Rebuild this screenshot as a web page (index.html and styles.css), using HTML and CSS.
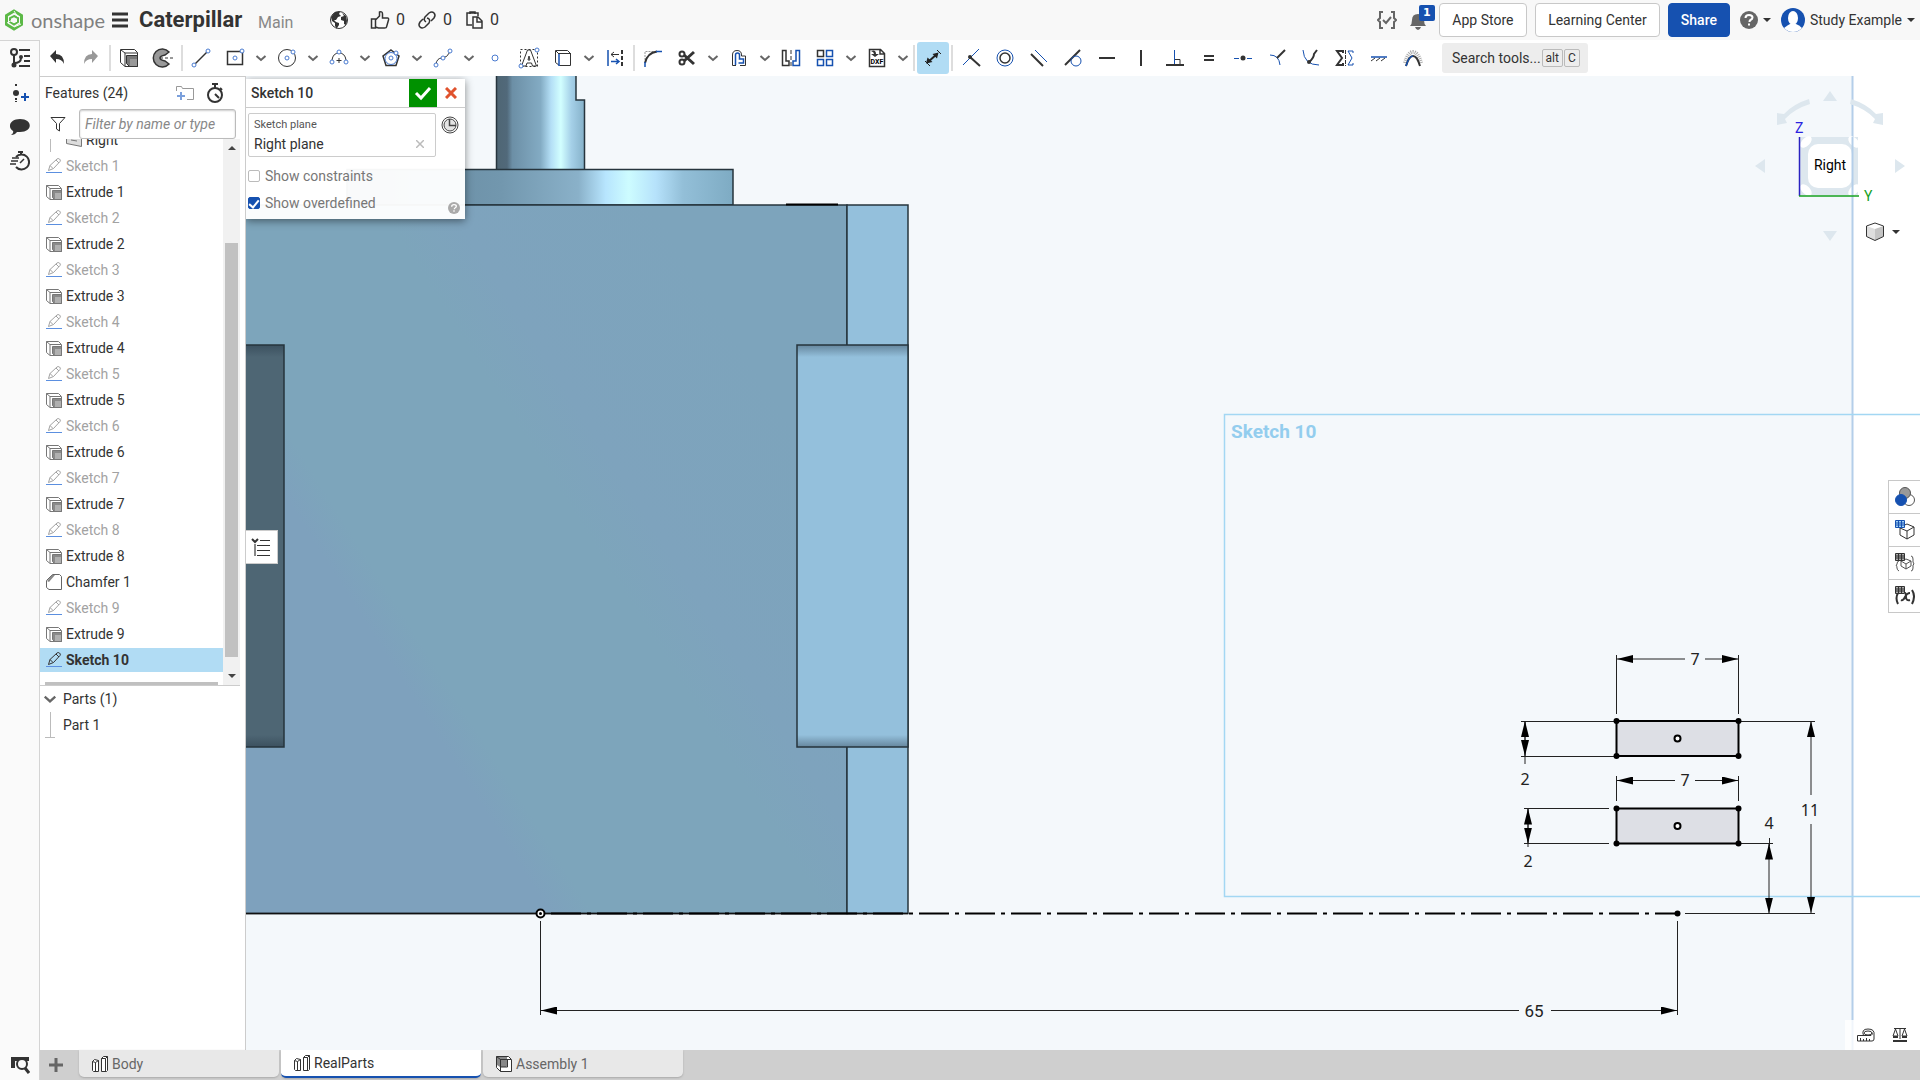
FILE: index.html
```html
<!DOCTYPE html>
<html lang="en">
<head>
<meta charset="utf-8">
<title>Caterpillar | RealParts</title>
<link rel="stylesheet" href="styles.css">
</head>
<body>
<svg class="defs" aria-hidden="true">
  <symbol id="sketch" viewBox="0 0 16 16"><path d="M2.500 12.500l1.500-5 7-6.500q1-1 2.500 0t.500 2.500L7.500 10.500zM4 7.500l3 3M10 2l3 3" fill="none" stroke="currentColor"/><path d="M0 14.500h16" stroke="#5b8fe0"/></symbol>
  <symbol id="extrude" viewBox="0 0 16 16"><path d="M.5 1.500h12l3 3v11H4l-3.500-3zM.5 1.500l3.500 3V15M4 4.500h11" fill="#fff" stroke="#777"/><path d="M6.500 6.500h9v9h-7l-2-2z" fill="#8a8a8a" stroke="#777"/><path d="M9 9h6v6H9z" fill="#b0b0b0"/></symbol>
  <symbol id="chev" viewBox="0 0 12 12"><path d="M1.500 4l4.500 4 4.500-4" fill="none" stroke="#666" stroke-width="2"/></symbol>
  <symbol id="studio" viewBox="0 0 18 18"><path d="M1.500 6.500l2-2 4 1v11h-5l-1-1zM1.500 6.500l3 1v9M4.500 7.500l3-2M10.500 3.500l2-2h4v14l-1 1h-5zM10.500 3.500h4v13M14.500 3.500l2-2" fill="#fff" stroke="#333"/></symbol>
</svg>

<header class="header">
  <a class="logo" href="#"><svg width="20" height="22" viewBox="0 0 20 22" fill="none" stroke="#5cb947"><path d="M10 2l7.500 4.500v9L10 20l-7.500-4.500v-9z" stroke-width="3"/><path d="M10 7l4 2v4l-4 2.500L6 13V9z" stroke-width="2"/><path d="M3 14l7-4M10 2l4 6M17 15l-7 3" stroke="#f8f8f8"/></svg><span>onshape</span></a>
  <button class="bare menu" aria-label="Menu"><svg width="16" height="16"><path d="M0 2h16M0 8h16M0 14h16" stroke="#333" stroke-width="3"/></svg></button>
  <h1>Caterpillar</h1><span class="branch">Main</span>
  <div class="stats">
    <svg class="globe" width="20" height="20" viewBox="0 0 20 20"><circle cx="10" cy="10" r="8.500" fill="#fff" stroke="#333"/><path d="M2 7l4-5 5 0-1 2 2 2-3 1-2 3H5l2 2 3 1 0 2-2 3v1l-2-3v-3l-3-2zM13 3l4 3 1 5-1 4-2-1v-3l-3-1 0-3 3-1z" fill="#333"/></svg>
    <button class="bare stat"><svg width="20" height="20" viewBox="0 0 20 20"><path d="M1.500 9h4v9h-4zM5.500 10l4-4V2q3-1 3 2v4h5q1.500 0 1 2l-2 7q0 1-2 1h-6l-3-1" fill="none" stroke="#333" stroke-width="1.500"/></svg>0</button>
    <button class="bare stat"><svg width="20" height="20" viewBox="0 0 20 20" fill="none" stroke="#333" stroke-width="1.500"><path d="M9 12Q6 10 8 7l4-4q3-2 5 0t0 5l-3 3M10 8q4 1 2 5l-4 4q-3 2-5 0t0-5l3-3"/></svg>0</button>
    <button class="bare stat"><svg width="20" height="20" viewBox="0 0 20 20" fill="none" stroke="#333" stroke-width="1.500"><path d="M8 15H3V3h11v3M6 4V2h5v2M9 7h5l4 4v7H9zM13 7v5h5"/></svg>0</button>
  </div>
  <div class="account">
    <svg class="braces" width="20" height="20" viewBox="0 0 20 20" fill="none" stroke="#666" stroke-width="2"><path d="M6 2H3v6l-2 2 2 2v6h3M14 2h3v6l2 2-2 2v6h-3M6 10l3 3 5-6"/></svg>
    <button class="bare bell" aria-label="Notifications"><svg width="18" height="20" viewBox="0 0 18 20"><path d="M1 16q2-2 2-6 0-6 6-6t6 6q0 4 2 6zM6 17h6q-1 3-3 3t-3-3" fill="#666"/></svg><span class="badge">1</span></button>
    <button class="btn">App Store</button>
    <button class="btn learn">Learning Center</button>
    <button class="btn share">Share</button>
    <button class="bare help" aria-label="Help"><svg width="18" height="18" viewBox="0 0 18 18"><circle cx="9" cy="9" r="9" fill="#666"/><path d="M5.500 7q0-3 3.500-3t3.500 2.500q0 1.500-2 2.500-1 .5-1 2M9 12.500v2" fill="none" stroke="#fff" stroke-width="2"/></svg><i class="caret"></i></button>
    <button class="bare user"><svg width="24" height="24" viewBox="0 0 24 24"><circle cx="12" cy="12" r="12" fill="#1651b0"/><ellipse cx="12" cy="10" rx="5" ry="7" fill="#fff"/><path d="M3 20q4-3 6-4h6q3 1 6 4-4 4-9 4t-9-4" fill="#fff"/></svg>Study Example<i class="caret"></i></button>
  </div>
</header>

<div class="work">
  <nav class="rail" aria-label="Document panels">
    <svg width="20" height="20" viewBox="0 0 20 20" fill="none" stroke="#333" stroke-width="2"><circle cx="4" cy="4" r="3"/><path d="M4 7v11M4 15q7 0 7-5M9 2h11M14 8h6M14 13h6M9 18h11"/><circle cx="11" cy="9" r="1"/><circle cx="4" cy="17" r="1.500"/></svg>
    <svg width="20" height="20" viewBox="0 0 20 20" stroke="#333" stroke-width="2"><path d="M6 1v3M6 15v4" stroke-dasharray="2 1"/><circle cx="6" cy="10" r="3" fill="#333" stroke="none"/><path d="M11 14h8M15 10v8" stroke="#1651b0"/></svg>
    <svg width="20" height="18" viewBox="0 0 20 18"><path d="M10 1c13 0 13 13 0 13q-2 0-3 0-2 3-6 3 3-2 2-4C-3 9 0 1 10 1" fill="#333"/></svg>
    <svg width="20" height="20" viewBox="0 0 20 20" fill="none" stroke="#333" stroke-width="2"><path d="M6 6a7.500 7.500 0 1 1 0 10M8 1h5M11 1v3"/><path d="M2 7h7M1 10h7M0 13h6M10 12l4-4" stroke-width="1.500"/></svg>
    <svg class="last" width="20" height="20" viewBox="0 0 20 20"><path d="M1 3h18v4H1zM1 7h4v7H1z" fill="#333"/><circle cx="12" cy="10" r="5" fill="#fafafa" stroke="#333" stroke-width="2"/><path d="M15 14l4 5" stroke="#333" stroke-width="3"/></svg>
  </nav>

  <div class="stage">
    <div class="toolbar" role="toolbar">
      <button class="tool" aria-label="Undo"><svg class="ic"><path d="M5 10l6-6v4q8 0 8 10-2-5-8-5v4z" fill="#333"/></svg></button>
      <button class="tool" aria-label="Redo"><svg class="ic"><path d="M19 10l-6-6v4q-8 0-8 10 2-5 8-5v4z" fill="#999"/></svg></button>
      <i class="sep"></i>
      <button class="tool" aria-label="Extrude"><svg class="ic"><path d="M3.500 3.500h14l3 3v14H8l-4.500-4zM4 4l4 3v13M8 7h12.500" fill="none" stroke="#333"/><path d="M9.500 9.500h11v11h-8l-3-3z" fill="#777" stroke="#333"/><path d="M13 13h7v7h-7z" fill="#999"/></svg></button>
      <button class="tool" aria-label="Revolve"><svg class="ic"><path d="M18 6a9 9 0 1 0 0 12l-4-3q-5-1-5-3t5-3z" fill="#999" stroke="#333" stroke-width="1.500"/><path d="M9 12h13" stroke="#333" stroke-dasharray="3 2"/></svg></button>
      <i class="sep"></i>
      <button class="tool" aria-label="Line"><svg class="ic"><path d="M6 18L18 6" stroke="#333" stroke-width="1.500"/><g class="pt"><circle cx="5" cy="19" r="2"/><circle cx="19" cy="5" r="2"/></g></svg></button>
      <button class="tool drop" aria-label="Rectangle"><svg class="ic"><path d="M4.500 5.500h15v13h-15z" class="k w1"/><g class="pt"><circle cx="12" cy="12" r="2"/><circle cx="19" cy="5" r="2"/></g></svg><svg class="ch"><use href="#chev"/></svg></button>
      <button class="tool drop" aria-label="Circle"><svg class="ic"><circle cx="12" cy="12" r="8.500" class="k"/><g class="pt"><circle cx="12" cy="12" r="2"/><circle cx="18" cy="6" r="2"/></g></svg><svg class="ch"><use href="#chev"/></svg></button>
      <button class="tool drop" aria-label="Arc"><svg class="ic"><path d="M5 14Q6 7 12 7t7 7M9.500 14.500h5M12 12v5" class="k"/><g class="pt"><circle cx="5" cy="16" r="2"/><circle cx="19" cy="16" r="2"/><circle cx="12" cy="6" r="2"/></g></svg><svg class="ch"><use href="#chev"/></svg></button>
      <button class="tool drop" aria-label="Polygon"><svg class="ic"><path d="M12 4l8 6-3 9.500H7L4 10z" class="k w1"/><g class="pt"><circle cx="12" cy="12.500" r="6"/><circle cx="12" cy="12" r="2"/><circle cx="17" cy="7" r="2"/></g></svg><svg class="ch"><use href="#chev"/></svg></button>
      <button class="tool drop" aria-label="Spline"><svg class="ic"><path d="M5 18q1-6 6-6t8-6" class="k"/><g class="pt"><circle cx="5" cy="19" r="2"/><circle cx="12" cy="12" r="2"/><circle cx="19" cy="5" r="2"/></g></svg><svg class="ch"><use href="#chev"/></svg></button>
      <button class="tool" aria-label="Point"><svg class="ic"><g class="pt"><circle cx="12" cy="12" r="3"/></g></svg></button>
      <button class="tool" aria-label="Text"><svg class="ic"><path d="M3.500 3.500h17v17h-17z" fill="none" stroke="#333" stroke-dasharray="2 2"/><path d="M4.500 20l6-16h3l6 16h-4l-1-3H10l-1 3zM11 14h2l-1-4z" fill="#fff" stroke="#333"/><g class="pt"><circle cx="4" cy="20" r="2"/><circle cx="20" cy="4" r="2"/></g></svg></button>
      <button class="tool drop" aria-label="Use"><svg class="ic"><path d="M4.500 4.500h12l3 3v12h-11l-4-3zM8 7.500h12M5 5l3 3" class="k"/><path d="M8 8v12" class="b"/></svg><svg class="ch"><use href="#chev"/></svg></button>
      <button class="tool" aria-label="Intersect"><svg class="ic"><path d="M5 4v16M8 15.500h8M13 13l3 2.500-3 2.500" class="b"/><path d="M19 4v16" stroke="#333" stroke-width="2" stroke-dasharray="4 2"/><path d="M16 8.500H8M11 6L8 8.500 11 11" class="k"/></svg></button>
      <i class="sep"></i>
      <button class="tool" aria-label="Fillet"><svg class="ic"><path d="M4 14V5.500h9" stroke="#999" stroke-dasharray="2 1" fill="none"/><path d="M4 17Q6 7 16 5.500" class="k w"/><path d="M4 16v5M15 5.500h6" class="b"/></svg></button>
      <button class="tool drop" aria-label="Trim"><svg class="ic"><g class="k w"><circle cx="7" cy="8" r="2.500"/><circle cx="7" cy="16" r="2.500"/><path d="M9 9l10 9M9 15l10-9" stroke-width="3"/></g></svg><svg class="ch"><use href="#chev"/></svg></button>
      <button class="tool drop" aria-label="Offset"><svg class="ic"><path d="M9 19.500H5.500V9q0-4.500 4.500-4.500T14.500 9v1h4v9.500H13" class="k"/><path d="M8.500 19V9q0-2 2-2t2 2v4h4v4h-5" class="b"/></svg><svg class="ch"><use href="#chev"/></svg></button>
      <button class="tool" aria-label="Mirror"><svg class="ic"><path d="M3.500 4.500h3.500V15h3v4.500H3.500z" class="k w1"/><path d="M20.500 4.500H17V15h-3v4.500h6.500z" class="b"/><path d="M12 4v16" stroke="#333" stroke-dasharray="4 2"/></svg></button>
      <button class="tool drop" aria-label="Pattern"><svg class="ic"><path d="M4.500 4.500h6v6h-6z" class="k w1"/><path d="M13.500 4.500h6v6h-6zM4.500 13.500h6v6h-6zM13.500 13.500h6v6h-6z" class="b"/></svg><svg class="ch"><use href="#chev"/></svg></button>
      <button class="tool drop" aria-label="Insert DXF"><svg class="ic"><path d="M4.500 3.500h11l4 4v13h-15zM15 4v4h4" class="k w1"/><path d="M6 5q5-2 5 3h3l-4 3-4-3h3q0-2-3-3" fill="#333"/><text x="12" y="18" text-anchor="middle" font-size="7" font-weight="700">DXF</text></svg><svg class="ch"><use href="#chev"/></svg></button>
      <i class="sep"></i>
      <button class="tool on" aria-label="Dimension"><svg class="ic"><path d="M7 16L16 8" stroke="#222" stroke-width="2"/><path d="M17.500 6.500l-1.500 6-4.500-4.500zM5 17.500l1.500-6 5 4.500z" fill="#222"/><path d="M16 4l4 4M4 15l5 5" stroke="#222"/></svg></button>
      <i class="sep"></i>
      <button class="tool" aria-label="Coincident"><svg class="ic"><path d="M4 19L20 3" class="b1"/><path d="M11 11l10 9" class="k w"/><circle cx="11" cy="11" r="2" fill="#333"/></svg></button>
      <button class="tool" aria-label="Concentric"><svg class="ic"><circle cx="12" cy="12" r="8" class="b1"/><circle cx="12" cy="12" r="5" class="k w1"/></svg></button>
      <button class="tool" aria-label="Parallel"><svg class="ic"><path d="M4 8l12 12" class="k w"/><path d="M8 4l12 12" class="b1"/></svg></button>
      <button class="tool" aria-label="Tangent"><svg class="ic"><path d="M4 19L19 4" class="k w"/><circle cx="15" cy="15" r="5" class="b1"/></svg></button>
      <button class="tool" aria-label="Horizontal"><svg class="ic"><path d="M4 12h16" class="k w"/></svg></button>
      <button class="tool" aria-label="Vertical"><svg class="ic"><path d="M12 4v16" class="k w"/></svg></button>
      <button class="tool" aria-label="Perpendicular"><svg class="ic"><path d="M11.500 4v15" class="b1"/><path d="M12 13.500h5V19" class="k"/><path d="M3 19h18" class="k w"/></svg></button>
      <button class="tool" aria-label="Equal"><svg class="ic"><path d="M7 10h10M7 14h10" class="k w"/></svg></button>
      <button class="tool" aria-label="Midpoint"><svg class="ic"><path d="M3 12.500h5M16 12.500h5" class="b1"/><circle cx="12" cy="12" r="2.500" fill="#333"/></svg></button>
      <button class="tool" aria-label="Normal"><svg class="ic"><path d="M5 9q9 0 10 10" class="b1"/><path d="M12 12l8-8" class="k w"/></svg></button>
      <button class="tool" aria-label="Pierce"><svg class="ic"><path d="M4 4q1 15 16 15" class="b1"/><path d="M10 16q5-4 5-8l3-4" class="k w"/><circle cx="10" cy="16" r="2" fill="#333"/></svg></button>
      <button class="tool" aria-label="Symmetric"><svg class="ic"><path d="M10 7V5H4l5 7-5 7h6v-2" class="k w"/><path d="M20 7V5h-5l4 7-4 7h5v-2" class="b1"/><path d="M12.500 4v16" stroke="#333" stroke-dasharray="4 1"/></svg></button>
      <button class="tool" aria-label="Fix"><svg class="ic"><path d="M4 11h16" class="b"/><path d="M4 15l4-3M9 15l4-3M14 15l4-3" class="k"/></svg></button>
      <button class="tool" aria-label="Curvature"><svg class="ic"><path d="M4 17Q7 6 12 6t8 11" fill="none" stroke="#aaa" stroke-width="4" stroke-dasharray="1 1"/><path d="M5 20q3-10 7-10t7 10" class="k w"/><path d="M5 20q3-10 7-10" class="b"/></svg></button>
      <button class="search">Search tools...<kbd>alt</kbd><kbd>C</kbd></button>
    </div>

    <div class="middle">
      <aside class="features">
        <div class="fhead"><h2>Features (24)</h2>
          <button class="bare" aria-label="Add folder"><svg width="20" height="18" viewBox="0 0 20 18" fill="none"><path d="M1.500 7V2.500h5l1 2h11v11H12" stroke="#999"/><path d="M6 8v8M2 12h8" stroke="#7ba0dc" stroke-width="2"/></svg></button>
          <button class="bare" aria-label="Stopwatch"><svg width="20" height="20" viewBox="0 0 20 20" fill="none" stroke="#333" stroke-width="2"><circle cx="10" cy="12" r="7"/><path d="M7 1h6M10 1v4M15 5l2 2M10 11l4 4"/></svg></button></div>
        <div class="filter"><svg width="18" height="18" viewBox="0 0 18 18"><path d="M2 2.500h14l-5.500 6V16l-3-2V8.500z" fill="none" stroke="#333"/></svg><input type="text" aria-label="Filter" placeholder="Filter by name or type"></div>
        <div class="listbox">
          <ul class="list">
            <li class="plane"><svg class="fi"><path d="M.5 2.500l15 2v10l-15-3zM5 8l6 1" fill="#ddd" stroke="#777"/></svg>Right</li>
            <li class="off"><svg class="fi"><use href="#sketch"/></svg>Sketch 1</li>
            <li><svg class="fi"><use href="#extrude"/></svg>Extrude 1</li>
            <li class="off"><svg class="fi"><use href="#sketch"/></svg>Sketch 2</li>
            <li><svg class="fi"><use href="#extrude"/></svg>Extrude 2</li>
            <li class="off"><svg class="fi"><use href="#sketch"/></svg>Sketch 3</li>
            <li><svg class="fi"><use href="#extrude"/></svg>Extrude 3</li>
            <li class="off"><svg class="fi"><use href="#sketch"/></svg>Sketch 4</li>
            <li><svg class="fi"><use href="#extrude"/></svg>Extrude 4</li>
            <li class="off"><svg class="fi"><use href="#sketch"/></svg>Sketch 5</li>
            <li><svg class="fi"><use href="#extrude"/></svg>Extrude 5</li>
            <li class="off"><svg class="fi"><use href="#sketch"/></svg>Sketch 6</li>
            <li><svg class="fi"><use href="#extrude"/></svg>Extrude 6</li>
            <li class="off"><svg class="fi"><use href="#sketch"/></svg>Sketch 7</li>
            <li><svg class="fi"><use href="#extrude"/></svg>Extrude 7</li>
            <li class="off"><svg class="fi"><use href="#sketch"/></svg>Sketch 8</li>
            <li><svg class="fi"><use href="#extrude"/></svg>Extrude 8</li>
            <li><svg class="fi"><path d="M.5 6.500l6-6h7l2 2v13H3l-2.500-2z" fill="#fff" stroke="#666"/><path d="M1 7l5-6h3L3 8z" fill="#888"/></svg>Chamfer 1</li>
            <li class="off"><svg class="fi"><use href="#sketch"/></svg>Sketch 9</li>
            <li><svg class="fi"><use href="#extrude"/></svg>Extrude 9</li>
            <li class="sel"><svg class="fi"><use href="#sketch"/></svg>Sketch 10</li>
            <li class="rollback"></li>
          </ul>
          <div class="scroll"><i class="up"></i><i class="thumb"></i><i class="down"></i></div>
        </div>
        <div class="parts"><svg width="14" height="14"><use href="#chev"/></svg>Parts (1)</div>
        <div class="part"><i></i>Part 1</div>
      </aside>

      <main class="canvas">
        <svg class="scene" viewBox="246 76 1674 974" preserveAspectRatio="xMinYMin slice">
          <defs>
            <linearGradient id="shaft"><stop offset="0" stop-color="#4f6674"/><stop offset=".12" stop-color="#51697a"/><stop offset=".18" stop-color="#6c8fa6"/><stop offset=".5" stop-color="#83abc3"/><stop offset=".62" stop-color="#b4dff6"/><stop offset=".73" stop-color="#d2ffff"/><stop offset=".85" stop-color="#a5d0e8"/><stop offset="1" stop-color="#85b1c9"/></linearGradient>
            <linearGradient id="flange"><stop offset="0" stop-color="#63869b"/><stop offset=".4" stop-color="#7297ae"/><stop offset=".6" stop-color="#8ab1c9"/><stop offset=".67" stop-color="#b7e5fe"/><stop offset=".73" stop-color="#cdfcff"/><stop offset=".8" stop-color="#b6e2fb"/><stop offset=".87" stop-color="#93bfd8"/><stop offset="1" stop-color="#7eabc3"/></linearGradient>
            <linearGradient id="face" gradientUnits="userSpaceOnUse" x1="150" y1="560" x2="670" y2="230"><stop offset="0" stop-color="#7ea1bd"/><stop offset=".24" stop-color="#7ea1bd"/><stop offset=".3" stop-color="#7da5bb"/><stop offset=".62" stop-color="#7da5bb"/><stop offset=".72" stop-color="#7ea3bd"/><stop offset="1" stop-color="#7da4bc"/></linearGradient>
            <linearGradient id="inset" x1="0" y1="0" x2="0" y2="1"><stop offset="0" stop-color="#203040" stop-opacity=".4"/><stop offset=".03" stop-color="#203040" stop-opacity="0"/><stop offset=".97" stop-color="#203040" stop-opacity="0"/><stop offset="1" stop-color="#203040" stop-opacity=".4"/></linearGradient>
            <marker id="arrow" markerUnits="userSpaceOnUse" markerWidth="16" markerHeight="8" refX="16" refY="4" orient="auto-start-reverse"><path d="M0 0l16 4-16 4z"/></marker>
          </defs>
          <path d="M246 76h1607v974H246z" fill="#f4f8fb"/>
          <path d="M496.500 70H576v30h8.500v70h-88z" fill="url(#shaft)"/>
          <path d="M496.500 70v100M576 70v30h8.500v70" class="edge"/>
          <path d="M347 169.500h386V205H347z" fill="url(#flange)" class="edge"/>
          <path d="M240 205h607v708.500H240z" fill="url(#face)" class="edge"/>
          <path d="M847 205h61v708.500h-61z" fill="#94c0dc" class="edge"/>
          <path d="M786 204.500h52" stroke="#000" stroke-width="2"/>
          <path d="M797 345h111v402H797z" fill="#94c0dc"/><path d="M797 345h111v402H797z" fill="url(#inset)" class="edge"/>
          <path d="M240 345h44v402h-44z" fill="#4e6674"/><path d="M240 345h44v402h-44z" fill="url(#inset)" class="edge"/>
          <path d="M1852.500 70v990" stroke="#b4cee9" stroke-width="2"/>
          <path d="M1930 414.500H1224.500v482H1930" fill="none" stroke="#a3d7f3" stroke-width="1.500"/>
          <text x="1231" y="438" class="sketchname">Sketch 10</text>
          <path d="M246 913.500h662" stroke="#111" stroke-width="1.500"/>
          <path d="M551 913.500h1126" stroke="#000" stroke-width="2" stroke-dasharray="30 6 4 6"/>
          <g fill="#dddfe5" stroke="#000" stroke-width="2"><path d="M1616.500 721h122v35h-122zM1616.500 808.500h122v35h-122z"/></g>
          <g class="ext"><path d="M1616.500 655v59M1738.500 655v59M1616.500 776v25M1738.500 776v25M1521 721.500h95M1521 756.500h95M1524 808.500h85M1524 843.500h85M1525 721v43M1528 808v39M1738 721.500h77M1738 843.500h35M1769.500 838v8M1685 913.500h130M540.500 921v94M1677.500 921v94"/></g>
          <g class="dim"><path d="M1617 659H1685" marker-start="url(#arrow)"/><path d="M1705 659H1738" marker-end="url(#arrow)"/><path d="M1617 780.500H1675" marker-start="url(#arrow)"/><path d="M1695 780.500H1738" marker-end="url(#arrow)"/><path d="M1525 721v35" marker-start="url(#arrow)" marker-end="url(#arrow)"/><path d="M1528 808.500v35" marker-start="url(#arrow)" marker-end="url(#arrow)"/><path d="M1769 843.500v70" marker-start="url(#arrow)" marker-end="url(#arrow)"/><path d="M1811 721v74" marker-start="url(#arrow)"/><path d="M1811 824v89" marker-end="url(#arrow)"/><path d="M541 1010.500h978" marker-start="url(#arrow)"/><path d="M1551 1010.500h126" marker-end="url(#arrow)"/></g>
          <g fill="#000"><circle cx="1616.500" cy="721" r="3"/><circle cx="1738.500" cy="721" r="3"/><circle cx="1616.500" cy="756" r="3"/><circle cx="1738.500" cy="756" r="3"/><circle cx="1616.500" cy="808.500" r="3"/><circle cx="1738.500" cy="808.500" r="3"/><circle cx="1616.500" cy="843.500" r="3"/><circle cx="1738.500" cy="843.500" r="3"/><circle cx="1677.500" cy="913.500" r="3"/></g>
          <g fill="#fff" stroke="#000" stroke-width="2"><circle cx="1677.500" cy="738.500" r="3"/><circle cx="1677.500" cy="826" r="3"/><circle cx="540.500" cy="913.500" r="4"/></g><circle cx="540.500" cy="913.500" r="1.500"/>
          <g class="num"><text x="1695" y="665">7</text><text x="1685" y="786">7</text><text x="1525" y="785">2</text><text x="1528" y="867">2</text><text x="1769" y="829">4</text><text x="1810" y="816">11</text><text x="1534" y="1017" class="big">65</text></g>
        </svg>

        <form class="dialog">
          <div class="dtitle"><b>Sketch 10</b><button type="button" class="ok" aria-label="Accept"><svg width="18" height="16"><path d="M2 8l5 5 9-10" fill="none" stroke="#fff" stroke-width="3"/></svg></button><button type="button" class="bare cancel" aria-label="Cancel"><svg width="12" height="12"><path d="M1 1l10 10M11 1L1 11" stroke="#e0522d" stroke-width="3"/></svg></button></div>
          <div class="dbody">
            <div class="plane-row"><div class="field"><label for="plane">Sketch plane</label><div><input id="plane" type="text" value="Right plane"><button type="button" class="bare" aria-label="Clear"><svg width="8" height="8"><path d="M0 0l8 8M8 0L0 8" stroke="#bbb" stroke-width="1.500"/></svg></button></div></div>
            <svg width="18" height="18" viewBox="0 0 18 18" fill="none" stroke="#444"><circle cx="9" cy="9" r="8"/><circle cx="9" cy="9" r="6" fill="#e4e4e4"/><path d="M8.500 3v6.500H15" stroke-width="1.500"/></svg></div>
            <label class="check"><input type="checkbox"><span>Show constraints</span></label>
            <label class="check"><input type="checkbox" checked><span>Show overdefined</span></label>
          </div>
          <svg class="dhelp" width="12" height="12" viewBox="0 0 18 18"><circle cx="9" cy="9" r="9" fill="#aaa"/><path d="M5.500 7q0-3 3.500-3t3.500 2.500q0 1.500-2 2.500-1 .5-1 2M9 12.500v2" fill="none" stroke="#fff" stroke-width="2"/></svg>
        </form>

        <button class="flyout" aria-label="Feature list"><svg width="20" height="20" viewBox="0 0 20 20" fill="none" stroke="#333"><path d="M1 2l3 3 3-3" stroke-width="2"/><path d="M9 3.500h10M6 8.500h13M6 13.500h13M6 18.500h13"/><path d="M4 7v12" stroke="#888" stroke-width="2"/></svg></button>

        <svg class="cube" width="180" height="180" viewBox="0 0 180 180">
          <g fill="#dde7ee"><path d="M90 11l7 10H83zM90 161l7-10H83zM15 86l10-7v14zM165 86l-10-7v14zM60 57h58v58H60z"/><path d="M69 19q-16 5-25 15l-7-1v12l10-2-2-4q9-10 25-15zM111 19q16 5 25 15l7-1v12l-10-2 2-4q-9-10-25-15z"/></g>
          <g fill="#fff"><ellipse cx="66" cy="62" rx="7" ry="4" transform="rotate(-45 66 62)"/><ellipse cx="114" cy="62" rx="7" ry="4" transform="rotate(45 114 62)"/><ellipse cx="66" cy="110" rx="7" ry="4" transform="rotate(45 66 110)"/><ellipse cx="114" cy="110" rx="7" ry="4" transform="rotate(-45 114 110)"/><rect x="68" y="64" width="44" height="44" rx="10"/></g>
          <path d="M112.500 57v58" stroke="#b4cee9" stroke-width="2"/>
          <path d="M59.500 57v59" stroke="#2a22c0" stroke-width="1.500"/><path d="M59 116h60" stroke="#14a01e" stroke-width="1.500"/>
          <text x="90" y="90" text-anchor="middle">Right</text><text x="55" y="53" fill="#2a22e0">Z</text><text x="124" y="121" fill="#14a01e">Y</text>
          <path d="M126.500 146l8.500-3 8.500 3v10.500l-8.500 4-8.500-4z" fill="#fff"/><path d="M135 149l8.500-3v10.500l-8.500 4z" fill="#c4c4c4"/><path d="M126.500 146l8.500 3v11.500l-8.500-4z" fill="#dedede"/><path d="M126.500 146l8.500-3 8.500 3v10.500l-8.500 4-8.500-4z" fill="none" stroke="#333"/><path d="M152 150h8l-4 4z" fill="#333"/>
        </svg>

        <div class="side">
          <button aria-label="Appearance"><svg width="20" height="20" viewBox="0 0 20 20" stroke="#555"><circle cx="14" cy="13" r="5.500" fill="#fff"/><circle cx="10" cy="6" r="5.500" fill="#999"/><circle cx="6" cy="13" r="5.500" fill="#1651b0" stroke="#1651b0"/></svg></button>
          <button aria-label="Configurations"><svg width="20" height="20" viewBox="0 0 20 20" fill="none" stroke="#333"><path d="M5 7l7-3 7 3v8l-7 4-7-4zM5 8l7 3 7-4M12 11v8"/><path d="M.5.500h9v7h-9z" fill="#9fd0f5" stroke="#1651b0"/><path d="M.5 3h9M.5 5h9M3.500 1v6M6.500 1v6" stroke="#1651b0"/></svg></button>
          <button aria-label="Custom tables"><svg width="20" height="20" viewBox="0 0 20 20" fill="none" stroke="#555"><path d="M6 8l5-2 5 2v5l-5 3-5-3zM6 8l5 3 5-3M11 11v5M4 8q-2 0-2 3 0 1-1 1 1 1 1 3t2 3M16 3q2 0 2 3v3l1 2-1 1v3q0 3-2 3"/><path d="M.5.500h9v7h-9z" fill="#aaa" stroke="#333"/><path d="M.5 3h9M.5 5h9M3.500 1v6M6.500 1v6" stroke="#333"/></svg></button>
          <button aria-label="Variables"><svg width="20" height="20" viewBox="0 0 20 20" fill="none" stroke="#333" stroke-width="2"><path d="M3 7q-3 5 0 11M17 4q4 6 0 14M6 14q2 1 4-3t5-4M10 7q1 0 1 4t4 3"/><path d="M.5.500h9v7h-9z" fill="#aaa" stroke-width="1"/><path d="M.5 3h9M.5 5h9M3.500 1v6M6.500 1v6" stroke-width="1"/></svg></button>
        </div>
        <div class="measure">
          <svg width="18" height="14" viewBox="0 0 18 14" fill="none" stroke="#333"><path d="M.5 7.500h6Q4 1 11 1t6 6v4q0 2-2 2H.5zM6 7.500h8q2-1 1-3"/><ellipse cx="11" cy="5" rx="4" ry="2"/><path d="M3.500 10v3M6.500 11v2M9.500 10v3M12.500 11v2"/></svg>
          <svg width="16" height="16" viewBox="0 0 16 16" fill="none" stroke="#333"><path d="M2 1.500h12M8 1v11M3.500 2L1 9h5zM12.500 2L10 9h5z"/><path d="M1 10h5M10 10h5M1 14h14" stroke-width="2"/></svg>
        </div>
      </main>
    </div>

    <footer class="tabs">
      <button class="bare plus" aria-label="New element"><svg width="16" height="16"><path d="M1 8h14M8 1v14" stroke="#666" stroke-width="3"/></svg></button>
      <button class="tab"><svg width="18" height="18"><use href="#studio"/></svg>Body</button>
      <button class="tab active"><svg width="18" height="18"><use href="#studio"/></svg>RealParts</button>
      <button class="tab"><svg width="18" height="18" viewBox="0 0 18 18"><path d="M1.500 1.500h12l3 3v12h-11l-4-4z" fill="#fff" stroke="#333"/><path d="M2 2h10v9l-1 1H5l-3-2z" fill="#888"/><path d="M1.500 1.500l4 3v12M5 4.500h11M12.500 5v7h-7" fill="none" stroke="#333"/></svg>Assembly 1</button>
    </footer>
  </div>
</div>
</body>
</html>
```
FILE: styles.css
```css
* { box-sizing: border-box; }
body { margin: 0; height: 100vh; display: flex; flex-direction: column; overflow: hidden; font: 14px/20px Roboto, "Liberation Sans", sans-serif; color: #333; background: #fff; }
button, input { font: inherit; color: inherit; }
button { cursor: pointer; }
svg { display: block; flex: none; }
.defs { position: absolute; width: 0; height: 0; }
.bare { border: 0; padding: 0; background: none; display: flex; align-items: center; }

.header { display: flex; align-items: center; flex: none; height: 40px; background: #f8f8f8; padding: 0 5px 0 4px; }
.logo { display: flex; align-items: center; gap: 7px; width: 108px; font: 20px/24px Lato, sans-serif; color: #808080; text-decoration: none; }
.menu { width: 27px; }
h1 { margin: 0; width: 119px; font-size: 22px; line-height: 28px; font-weight: 700; }
.branch { font-size: 16px; color: #888; padding-top: 6px; width: 71px; }
.stats { display: flex; align-items: center; }
.globe { margin-right: 21px; }
.stat { gap: 6px; width: 47px; font-size: 16px; }
.account { display: flex; align-items: center; margin-left: auto; }
.braces { margin-right: 12px; }
.bell { position: relative; width: 30px; }
.badge { position: absolute; left: 10px; top: -5px; width: 16px; height: 16px; border-radius: 2px; background: #1651b0; color: #fff; font: 700 11px/16px "DejaVu Sans", sans-serif; text-align: center; }
.btn { height: 34px; width: 88px; padding: 0; border: 1px solid #c8c8c8; border-radius: 4px; background: #fff; margin-right: 8px; white-space: nowrap; }
.learn { width: 125px; }
.share { width: 62px; background: #1651b0; border-color: #1651b0; color: #fff; font-weight: 500; margin-right: 10px; }
.help { gap: 5px; margin-right: 10px; }
.user { gap: 5px; white-space: nowrap; }
.caret { border: 4px solid transparent; border-top-color: #333; border-bottom: 0; }

.work { display: flex; flex: 1; min-height: 0; }
.rail { width: 40px; flex: none; border-right: 1px solid #d4d4d4; border-top: 1px solid #d4d4d4; background: #fafafa; display: flex; flex-direction: column; align-items: center; gap: 15px; padding: 7px 0 6px; }
.rail .last { margin-top: auto; }
.stage { flex: 1; min-width: 0; display: flex; flex-direction: column; }
.toolbar { display: flex; align-items: center; flex: none; height: 36px; background: #fff; }
.tool { display: flex; align-items: center; width: 34px; height: 32px; padding: 0 5px; border: 0; background: none; flex: none; }
.drop { width: 52px; }
.on { width: 32px; margin: 0 1px; padding: 0 4px; background: #b1dcf4; border-radius: 3px; }
.ic { width: 24px; height: 24px; }
.ch { width: 12px; height: 12px; margin-left: 8px; }
.sep { width: 2px; height: 26px; margin: 0 1px; background: #ddd; flex: none; }
.k { fill: none; stroke: #333; }
.w { stroke-width: 2; }
.w1 { stroke-width: 1.5; }
.b { fill: none; stroke: #1651b0; stroke-width: 1.5; }
.b1 { fill: none; stroke: #1651b0; }
.pt { fill: #fff; stroke: #4a7bd0; }
.pt circle[r="6"] { fill: none; }
.search { display: flex; align-items: center; height: 30px; margin-left: 12px; width: 146px; padding: 0 10px; border: 0; border-radius: 3px; background: #ededed; white-space: nowrap; }
kbd { font: 12px/16px Roboto, sans-serif; border: 1px solid #bbb; border-radius: 2px; padding: 0 3px; margin-left: 1px; }

.middle { display: flex; flex: 1; min-height: 0; }
.features { width: 206px; flex: none; border-top: 1px solid #ccc; border-right: 1px solid #ccc; background: #fff; }
.fhead { display: flex; align-items: center; gap: 10px; height: 32px; padding: 0 20px 0 5px; }
h2 { margin: 0 auto 0 0; font-size: 14px; font-weight: 400; }
.filter { display: flex; align-items: center; gap: 12px; padding: 0 9px; height: 30px; }
.filter input { flex: 1; min-width: 0; height: 30px; border: 1px solid #bbb; border-radius: 3px; padding: 0 5px; box-shadow: inset 0 1px 2px #ccc; }
.filter input::placeholder { font-style: italic; color: #888; }
.listbox { display: flex; border-bottom: 1px solid #ccc; margin-right: 5px; overflow: hidden; }
.list { flex: 1; list-style: none; margin: -12px 0 0; padding: 0; }
.list li { display: flex; align-items: center; gap: 4px; height: 24px; margin: 1px 0 2px; padding-left: 6px; }
.list .plane { margin-left: 10px; border-left: 1px solid #bbb; padding-left: 15px; }
.list .off { color: #a2a2a2; }
.list .sel { background: #b1dcf4; font-weight: 700; }
.list .rollback { height: 3px; margin: 10px 5px 0; padding: 0; background: #c0c0c0; }
.fi { width: 16px; height: 16px; }
.scroll { width: 17px; background: #f1f1f1; display: flex; flex-direction: column; align-items: center; padding: 7px 0; }
.scroll .up { border: 4px solid transparent; border-bottom-color: #444; border-top: 0; }
.scroll .down { border: 4px solid transparent; border-top-color: #444; border-bottom: 0; }
.thumb { width: 13px; flex: 1; margin: 93px 0 17px; background: #c1c1c1; }
.parts { display: flex; align-items: center; gap: 6px; height: 26px; padding-left: 3px; }
.part { display: flex; align-items: center; height: 26px; padding-left: 5px; gap: 8px; }
.part i { width: 10px; height: 26px; border-bottom: 1px solid #bbb; background: linear-gradient(#bbb, #bbb) 5px 0 / 1px 100% no-repeat; }

.canvas { flex: 1; min-width: 0; position: relative; overflow: hidden; background: #fff; }
.scene { width: 100%; height: 100%; }
.edge { stroke: #26343d; stroke-width: 1.5; }
path.edge:not([fill]) { fill: none; }
.sketchname { font: 700 19px Roboto, sans-serif; fill: #93cdee; }
.ext, .dim { fill: none; stroke: #222; }
.num { font: 16px "Noto Sans", sans-serif; text-anchor: middle; fill: #222; }
.big { font: 17px Roboto, sans-serif; }
.dialog { position: absolute; left: 0; top: 3px; width: 219px; height: 140px; background: rgba(255,255,255,.96); box-shadow: 0 2px 8px rgba(0,0,0,.45); color: #777; }
.dtitle { display: flex; align-items: center; height: 29px; border-bottom: 1px solid #ccc; padding-left: 5px; background: #fff; color: #333; }
.dtitle b { font-weight: 500; margin-right: auto; }
.ok { width: 28px; height: 28px; padding: 5px; border: 0; background: #009100; }
.cancel { width: 28px; justify-content: center; }
.dbody { padding: 5px 6px 0 2px; }
.plane-row { display: flex; align-items: start; gap: 5px; margin-bottom: 9px; }
.plane-row > svg { margin-top: 3px; }
.field { flex: 1; min-width: 0; height: 44px; border: 1px solid #ccc; border-radius: 2px; padding: 2px 5px; background: #fff; font-size: 11px; line-height: 18px; color: #555; }
.field label { display: block; }
.field > div { display: flex; align-items: center; padding-right: 6px; }
.field input { flex: 1; width: 0; min-width: 0; border: 0; padding: 0; height: 20px; font-size: 14px; color: #333; background: none; }
.check { display: flex; align-items: center; gap: 5px; height: 20px; margin-bottom: 7px; }
.check input { appearance: none; width: 12px; height: 12px; margin: 0; border: 1px solid #bbb; border-radius: 2px; background: #fff; }
.check input:checked { border-color: #1651b0; background: #1651b0; display: grid; place-items: center; }
.check input:checked::after { content: ""; width: 4px; height: 8px; border: solid #fff; border-width: 0 2px 2px 0; transform: rotate(40deg); }
.dhelp { position: absolute; right: 5px; bottom: 5px; }
.flyout { position: absolute; left: 0; top: 454px; width: 32px; height: 34px; padding: 6px 5px; border: 1px solid #ccc; border-left: 0; background: #fff; }
.cube { position: absolute; right: 0; top: 4px; font-size: 14px; }
.side { position: absolute; right: 0; top: 404px; width: 32px; border: 1px solid #c8c8c8; border-right: 0; background: #fff; }
.side button { display: flex; align-items: center; width: 100%; height: 33px; padding: 0 0 0 6px; border: 0; border-bottom: 1px solid #c8c8c8; background: none; }
.side button:last-child { border-bottom: 0; height: 32px; }
.measure { position: absolute; right: 0; bottom: 0; width: 75px; height: 30px; padding-left: 12px; display: flex; align-items: center; gap: 17px; background: rgba(255,255,255,.8); }

.tabs { flex: none; height: 30px; display: flex; background: #cfcfcf; gap: 2px; }
.plus { width: 37px; padding-left: 8px; }
.tab { display: flex; align-items: center; gap: 3px; width: 200px; height: 27px; padding: 0 12px; border: 0; border-radius: 0 0 5px 5px; background: #e8e8e8; color: #666; box-shadow: 0 1px 2px #aaa; }
.tab.active { height: 28px; background: #fff; color: #333; border-bottom: 2px solid #1651b0; }
```
